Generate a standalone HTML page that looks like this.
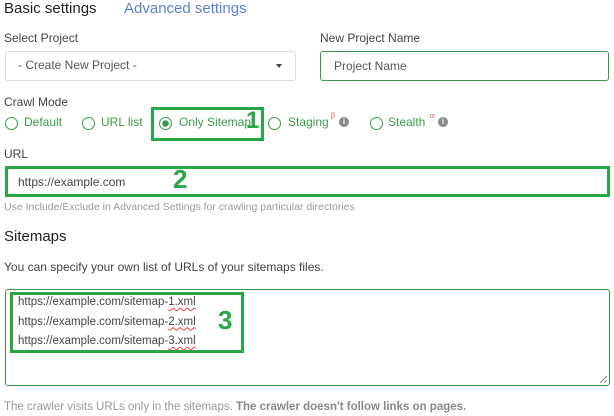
<!DOCTYPE html>
<html><head><meta charset="utf-8"><style>
body{margin:0;width:614px;height:416px;background:#fff;font-family:"Liberation Sans",sans-serif;position:relative;overflow:hidden;color:#333}
.a{position:absolute;white-space:nowrap}
.lbl{font-size:12px;color:#444}
.rad{position:absolute;width:11px;height:11px;border:1.3px solid #3a9a4a;border-radius:50%;top:117px}
.rt{position:absolute;top:115px;font-size:12px;color:#3a9a4a}
.info{position:absolute;top:117px;width:10px;height:10px;border-radius:50%;background:#888;color:#fff;font-size:8px;font-weight:bold;text-align:center;line-height:10px}
.sup{position:absolute;top:113px;font-size:7px;color:#e05555}
.g{border:3px solid #27a844;position:absolute;box-sizing:border-box}
.n{position:absolute;color:#27a844;font-weight:bold;font-size:26px}
.sq{text-decoration:underline wavy #e04040;text-decoration-thickness:1px;text-underline-offset:2px}
</style></head><body>
<div class="a" style="left:4px;top:0;font-size:15px;color:#222">Basic settings</div>
<div class="a" style="left:124px;top:0;font-size:15px;color:#5b7fd8">Advanced settings</div>
<div class="a lbl" style="left:4px;top:31px">Select Project</div>
<div class="a" style="left:5px;top:51px;width:289px;height:28px;border:1px solid #ddd;border-radius:3px"></div>
<div class="a" style="left:18px;top:58px;font-size:12px;color:#555">- Create New Project -</div>
<div class="a" style="left:276px;top:64px;width:0;height:0;border-left:3.5px solid transparent;border-right:3.5px solid transparent;border-top:4px solid #444"></div>
<div class="a lbl" style="left:320px;top:31px">New Project Name</div>
<div class="a" style="left:320px;top:51px;width:287px;height:28px;border:1px solid #3a9a4a;border-radius:3px"></div>
<div class="a" style="left:334px;top:59px;font-size:12px;color:#555">Project Name</div>
<div class="a lbl" style="left:4px;top:95px">Crawl Mode</div>
<div class="rad" style="left:5px"></div><div class="rt" style="left:24px">Default</div>
<div class="rad" style="left:82px"></div><div class="rt" style="left:101px">URL list</div>
<div class="rad" style="left:159px;background:radial-gradient(circle,#3a9a4a 0 3px,#fff 3.5px)"></div><div class="rt" style="left:179px">Only Sitemap</div>
<div class="g" style="left:151px;top:107px;width:113px;height:34px"></div>
<div class="n" style="left:246px;top:107px;font-size:24px">1</div>
<div class="rad" style="left:268px"></div><div class="rt" style="left:288px">Staging</div><div class="sup" style="left:331px">β</div><div class="info" style="left:339px">i</div>
<div class="rad" style="left:370px"></div><div class="rt" style="left:388px">Stealth</div><div class="sup" style="left:430px">α</div><div class="info" style="left:438px">i</div>
<div class="a lbl" style="left:4px;top:147px">URL</div>
<div class="g" style="left:5px;top:166px;width:605px;height:31px"></div>
<div class="a" style="left:18px;top:175px;font-size:12px;color:#444">https://example.com</div>
<div class="n" style="left:173px;top:164px">2</div>
<div class="a" style="left:4px;top:201px;font-size:10.5px;color:#999">Use Include/Exclude in Advanced Settings for crawling particular directories</div>
<div class="a" style="left:4px;top:228px;font-size:15px;color:#222">Sitemaps</div>
<div class="a" style="left:4px;top:260px;font-size:12px;color:#444">You can specify your own list of URLs of your sitemaps files.</div>
<div class="a" style="left:5px;top:289px;width:603px;height:95px;border:1px solid #3a9a4a;border-radius:3px"></div>
<div class="g" style="left:10px;top:292px;width:234px;height:61px"></div>
<div class="a" style="left:18px;top:293px;font-size:11.5px;color:#444;line-height:19.5px">https://example.com/sitemap-<span class="sq">1.xml</span><br>https://example.com/sitemap-<span class="sq">2.xml</span><br>https://example.com/sitemap-<span class="sq">3.xml</span></div>
<div class="n" style="left:218px;top:305px">3</div>
<div class="a" style="left:600px;top:376px;width:7px;height:7px;background:linear-gradient(135deg,transparent 45%,#888 45%,#888 55%,transparent 55%,transparent 75%,#888 75%,#888 85%,transparent 85%)"></div>
<div class="a" style="left:4px;top:401px;font-size:11.5px;color:#999">The crawler visits URLs only in the sitemaps. <b style="color:#888">The crawler doesn't follow links on pages.</b></div>
</body></html>
